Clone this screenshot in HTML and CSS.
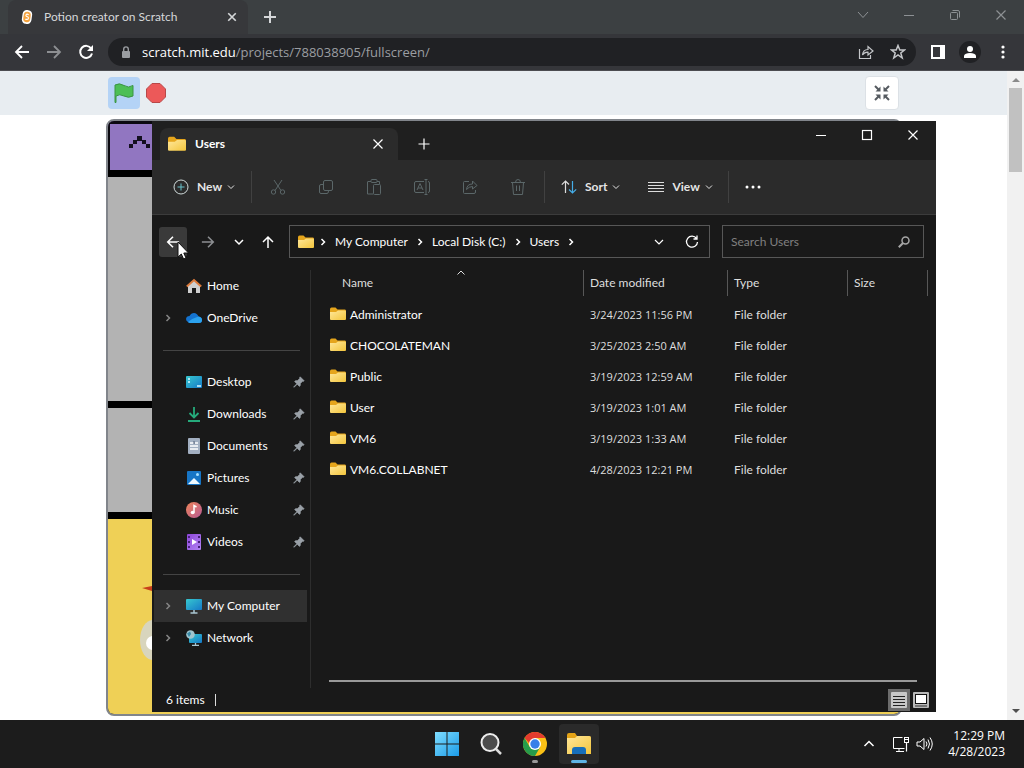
FILE: index.html
```html
<!DOCTYPE html>
<html lang="en">
<head>
<meta charset="utf-8">
<meta name="viewport" content="width=device-width, initial-scale=1">
<title>Potion creator on Scratch</title>
<link rel="stylesheet" href="styles.css">
</head>
<body>
<svg class="defs" aria-hidden="true">
  <defs>
    <linearGradient id="gold" x1="0" y1="0" x2="1" y2="1"><stop offset="0" stop-color="#ffe79a"/><stop offset="1" stop-color="#f3c53c"/></linearGradient>
    <linearGradient id="screen" x1="0" y1="0" x2="1" y2="1"><stop offset="0" stop-color="#37c8cf"/><stop offset="1" stop-color="#1579c8"/></linearGradient>
    <linearGradient id="winblue" x1="0" y1="0" x2="1" y2="1"><stop offset="0" stop-color="#7fddff"/><stop offset="1" stop-color="#1b9be8"/></linearGradient>
    <linearGradient id="rose" x1="0" y1="0" x2="1" y2="1"><stop offset="0" stop-color="#ee8559"/><stop offset="1" stop-color="#b85a94"/></linearGradient>
    <linearGradient id="violet" x1="0" y1="0" x2="1" y2="1"><stop offset="0" stop-color="#8d45d8"/><stop offset="1" stop-color="#b283f4"/></linearGradient>
    <symbol id="folder" viewBox="0 0 16 16"><path d="M0 3.2Q0 1.5 1.5 1.5H5.5L7.5 3.5H15Q16 3.5 16 5V8H0Z" fill="#e5a51c"/><path d="M0 6H6L8 4.5H15Q16 4.5 16 5.5V13Q16 14 15 14H1Q0 14 0 13Z" fill="url(#gold)"/></symbol>
    <symbol id="pin" viewBox="0 0 12 12"><path d="M7.2 0.8 11.2 4.8 10.2 5.5 9.6 5.3 7.4 7.5 7.3 9.6 6.4 10.4 4.2 8.2 1.2 11.2H.8V10.8L3.8 7.8 1.6 5.6 2.4 4.7 4.5 4.6 6.7 2.4 6.5 1.8Z" fill="#9aa1a8" stroke="#9aa1a8" stroke-width=".6"/></symbol>
    <symbol id="chev-down" viewBox="0 0 8 8"><path d="M1 2.5 4 5.5 7 2.5" fill="none" stroke="currentColor"/></symbol>
    <symbol id="chev-right" viewBox="0 0 8 8"><path d="M2.5 1 5.5 4 2.5 7" fill="none" stroke="currentColor" stroke-width="1.5"/></symbol>
    <symbol id="cross" viewBox="0 0 12 12"><path d="M1.5 1.5 10.5 10.5M10.5 1.5 1.5 10.5" fill="none" stroke="currentColor" stroke-width="1.2"/></symbol>
    <symbol id="cross-bold" viewBox="0 0 12 12"><path d="M1.5 1.5 10.5 10.5M10.5 1.5 1.5 10.5" fill="none" stroke="currentColor" stroke-width="2"/></symbol>
    <symbol id="plus" viewBox="0 0 12 12"><path d="M6 .5V11.500M.5 6H11.500" fill="none" stroke="currentColor" stroke-width="1.2"/></symbol>
    <symbol id="left" viewBox="0 0 16 16"><path d="M15 8H2M8 2 2 8 8 14" fill="none" stroke="currentColor" stroke-width="1.8"/></symbol>
    <symbol id="right" viewBox="0 0 16 16"><path d="M1 8H14M8 2 14 8 8 14" fill="none" stroke="currentColor" stroke-width="1.8"/></symbol>
    <symbol id="minus" viewBox="0 0 12 12"><path d="M1 6.500H11" stroke="currentColor"/></symbol>
  </defs>
</svg>
<div class="desktop">
  <section class="browser" aria-label="Browser">
    <header class="tabstrip">
      <div class="tab">
        <svg class="i14" viewBox="0 0 14 16"><rect x="1.500" y="0" width="11" height="16" rx="5" fill="#fff" transform="rotate(8 7 8)"/><rect x="3" y="2" width="8" height="12" rx="4" fill="#f5a440" transform="rotate(8 7 8)"/><path d="M9 5.500C6 3.500 4.500 6.500 7 7.500S9.500 11.500 5 10.500" fill="none" stroke="#fff" stroke-width="1.200"/></svg>
        <span class="tab-title">Potion creator on Scratch</span>
        <button class="plain" aria-label="Close tab"><svg class="i10"><use href="#cross-bold"/></svg></button>
      </div>
      <button class="plain newtab" aria-label="New tab"><svg class="i12" viewBox="0 0 12 12"><path d="M6 0V12M0 6H12" stroke="currentColor" stroke-width="2"/></svg></button>
      <div class="chrome-controls">
        <button class="plain" aria-label="Search tabs"><svg class="i12" viewBox="0 0 12 12"><path d="M1 3 6 8.500 11 3" fill="none" stroke="currentColor"/></svg></button>
        <button class="plain" aria-label="Minimize browser"><svg class="i12"><use href="#minus"/></svg></button>
        <button class="plain" aria-label="Restore browser"><svg class="i12" viewBox="0 0 12 12"><rect x="1.500" y="3.500" width="7" height="7" rx="1" fill="none" stroke="currentColor"/><path d="M3.500 1.500H9Q10.500 1.500 10.500 3V8.500" fill="none" stroke="currentColor"/></svg></button>
        <button class="plain" aria-label="Close browser"><svg class="i12"><use href="#cross"/></svg></button>
      </div>
    </header>
    <div class="toolbar">
      <div class="history">
        <button class="plain" aria-label="Back"><svg class="i16"><use href="#left"/></svg></button>
        <button class="plain dim" aria-label="Forward"><svg class="i16"><use href="#right"/></svg></button>
        <button class="plain" aria-label="Reload"><svg class="i16" viewBox="0 0 16 16"><path d="M13.200 4.500A6 6 0 1 0 14 9.500" fill="none" stroke="currentColor" stroke-width="2"/><path d="M15 1V7H9Z" fill="currentColor"/></svg></button>
      </div>
      <div class="omnibox">
        <svg class="i12" viewBox="0 0 12 12"><rect x="2" y="5" width="8" height="7" rx="1" fill="#9a9da1"/><path d="M3.700 5V3.200A2.300 2.300 0 0 1 8.300 3.200V5" fill="none" stroke="#9a9da1" stroke-width="1.400"/></svg>
        <a class="url" href="#"><b>scratch.mit.edu</b>/projects/788038905/fullscreen/</a>
        <button class="plain" aria-label="Share page"><svg class="i16" viewBox="0 0 16 16"><path d="M1.500 5V14.500H12.500V11M4.500 11Q5 5.500 10 5.500V2.500L15 7 10 11V8.200Q6.500 8 4.500 11Z" fill="none" stroke="currentColor" stroke-width="1.200"/></svg></button>
        <button class="plain" aria-label="Bookmark page"><svg class="i16" viewBox="0 0 16 16"><path d="M8 1.500 9.800 6H14.500L10.800 9 12.200 14 8 11 3.800 14 5.200 9 1.500 6H6.200Z" fill="none" stroke="currentColor" stroke-width="1.500"/></svg></button>
      </div>
      <div class="extras">
        <button class="plain" aria-label="Side panel"><svg class="i14" viewBox="0 0 14 14"><path d="M0 0H14V14H0ZM2 2V12H9V2Z" fill="#fff" fill-rule="evenodd"/></svg></button>
        <button class="plain avatar" aria-label="Profile"><svg class="i12" viewBox="0 0 12 12"><circle cx="6" cy="3" r="3" fill="#fff"/><path d="M0 12V9.500Q1 7 6 7T12 9.500V12Z" fill="#fff"/></svg></button>
        <button class="plain" aria-label="Browser menu"><svg class="i16" viewBox="0 0 16 16" fill="#fff"><circle cx="8" cy="3" r="1.600"/><circle cx="8" cy="8" r="1.600"/><circle cx="8" cy="13" r="1.600"/></svg></button>
      </div>
    </div>
    <div class="viewport">
      <main class="page">
        <div class="stage-controls">
          <button class="plain flag" aria-label="Go"><svg viewBox="0 0 22 22"><path d="M2 3Q6.500.5 11 3.500T20 3.500V14Q15.500 16.500 11 14T3 14V20.500H2Z" fill="#4cbf56" stroke="#3a9443"/></svg></button>
          <button class="plain stop" aria-label="Stop"><svg viewBox="0 0 20 20"><path d="M6 .5H14L19.500 6V14L14 19.500H6L.5 14V6Z" fill="#ec5959" stroke="#b84848"/></svg></button>
          <button class="plain shrink" aria-label="Exit full screen"><svg class="i16" viewBox="0 0 16 16"><path d="M1 1 5 5M15 1 11 5M1 15 5 11M15 15 11 11" stroke="#555a60" stroke-width="2"/><path d="M6.500 1.500V6.500H1.500ZM9.500 1.500V6.500H14.500ZM6.500 14.500V9.500H1.500ZM9.500 14.500V9.500H14.500Z" fill="#555a60"/></svg></button>
        </div>
        <div class="stage">
          <div class="purple"><svg viewBox="0 0 44 46"><path d="M19 20h4v4h-4zM23 16h4v4h-4zM27 12h5v5h-5zM32 16h4v4h-4zM36 20h4v4h-4z" fill="#141020"/></svg></div>
          <div class="grey tall"></div>
          <div class="grey short"></div>
          <div class="yellow"><svg viewBox="0 0 44 192"><path d="M34 69 44 67V72Z" fill="#c8401b"/><ellipse cx="45" cy="121" rx="13" ry="20" fill="#d8d5bd"/><circle cx="45" cy="124" r="7" fill="#fff"/></svg></div>
        </div>
      </main>
      <div class="scrollbar" aria-hidden="true"><span class="up"></span><span class="thumb"></span><span class="down"></span></div>
    </div>
  </section>

  <section class="explorer" aria-label="Users">
    <header class="titlebar">
      <div class="ex-tab"><svg class="i18"><use href="#folder"/></svg><span>Users</span><button class="plain" aria-label="Close Users tab"><svg class="i12"><use href="#cross"/></svg></button></div>
      <button class="plain ex-new" aria-label="New Users tab"><svg class="i12"><use href="#plus"/></svg></button>
      <div class="win-controls">
        <button class="plain" aria-label="Minimize"><svg class="i12"><use href="#minus"/></svg></button>
        <button class="plain" aria-label="Maximize"><svg class="i12" viewBox="0 0 12 12"><rect x="1.500" y="1.500" width="9" height="9" fill="none" stroke="currentColor" stroke-width="1.200"/></svg></button>
        <button class="plain" aria-label="Close"><svg class="i12"><use href="#cross"/></svg></button>
      </div>
    </header>
    <div class="commands">
      <button class="plain cmd new"><svg class="i16" viewBox="0 0 16 16"><circle cx="8" cy="8" r="7" fill="none" stroke="#cfdada"/><path d="M8 4.500V11.500M4.500 8H11.500" stroke="#69c3cc"/></svg>New<svg class="i8"><use href="#chev-down"/></svg></button>
      <span class="rule"></span>
      <div class="edit-group">
        <button class="plain" aria-label="Cut"><svg viewBox="0 0 16 16"><path d="M4 1 11 11.500M12 1 5 11.500"/><circle cx="3.500" cy="13" r="2.200"/><circle cx="12.500" cy="13" r="2.200"/></svg></button>
        <button class="plain" aria-label="Copy"><svg viewBox="0 0 16 16"><rect x="5.500" y="1.500" width="9" height="10" rx="1.500"/><path d="M5.500 5.500H3Q1.500 5.500 1.500 7V13Q1.500 14.500 3 14.500H9Q10.500 14.500 10.500 12"/></svg></button>
        <button class="plain" aria-label="Paste"><svg viewBox="0 0 16 16"><path d="M5 2.500H2Q1.500 2.500 1.500 3V15H7M11 2.500H13.500V5"/><rect x="5" y=".5" width="6" height="3" rx="1"/><rect x="7.500" y="5.500" width="7" height="10" rx="1"/></svg></button>
        <button class="plain" aria-label="Rename"><svg viewBox="0 0 16 16"><path d="M10 2.500H2Q.5 2.500.5 4V12Q.5 13.500 2 13.500H10M12 .5V15.500M10.500 .5H13.500M10.500 15.500H13.500M14 2.500Q15.500 2.500 15.500 4V12Q15.500 13.500 14 13.500M3 11 6 4.500 9 11M4 9H8"/></svg></button>
        <button class="plain" aria-label="Share"><svg viewBox="0 0 16 16"><path d="M7 2.500H2.500Q1.500 2.500 1.500 3.500V13.500Q1.500 14.500 2.500 14.500H12Q13.500 14.500 13.500 13V11M4.500 10.500Q5 5 10.500 5V2L15 6.500 10.500 10V7.500Q7 7.500 4.500 10.500Z"/></svg></button>
        <button class="plain" aria-label="Delete"><svg viewBox="0 0 16 16"><path d="M1 3.500H15M5.500 3.500Q5.500.5 8 .5T10.500 3.500M2.500 3.500 3.500 15.500H12.500L13.500 3.500M6.500 6.500V12M9.500 6.500V12"/></svg></button>
      </div>
      <span class="rule"></span>
      <button class="plain cmd sort"><svg class="i16" viewBox="0 0 16 16" fill="none"><path d="M4.500 14V2M.8 5.700 4.500 2 8 5.500" stroke="#ddd" stroke-width="1.200"/><path d="M11.500 2V14M8 10.500 11.500 14 15.200 10.300" stroke="#45aee8" stroke-width="1.200"/></svg>Sort<svg class="i8"><use href="#chev-down"/></svg></button>
      <button class="plain cmd view"><svg class="i16" viewBox="0 0 16 16"><path d="M0 3.500H16M0 6.500H16M0 9.500H16M0 12.500H16" stroke="#ddd"/></svg>View<svg class="i8"><use href="#chev-down"/></svg></button>
      <span class="rule"></span>
      <button class="plain more" aria-label="See more"><svg class="i16" viewBox="0 0 16 16" fill="#fff"><circle cx="2" cy="8" r="1.500"/><circle cx="8" cy="8" r="1.500"/><circle cx="14" cy="8" r="1.500"/></svg></button>
    </div>
    <div class="location">
      <div class="ex-history">
        <button class="plain current" aria-label="Previous folder"><svg class="i14"><use href="#left"/></svg></button>
        <button class="plain dim" aria-label="Next folder"><svg class="i14"><use href="#right"/></svg></button>
        <button class="plain" aria-label="Recent locations"><svg class="i12" viewBox="0 0 12 12"><path d="M2 4 6 8 10 4" fill="none" stroke="currentColor" stroke-width="1.500"/></svg></button>
        <button class="plain" aria-label="Up one level"><svg class="i14" viewBox="0 0 14 14"><path d="M7 13V2M2 7 7 2 12 7" fill="none" stroke="currentColor" stroke-width="1.500"/></svg></button>
      </div>
      <nav class="crumbs" aria-label="Address">
        <svg class="i16"><use href="#folder"/></svg>
        <svg class="i8"><use href="#chev-right"/></svg><a href="#">My Computer</a>
        <svg class="i8"><use href="#chev-right"/></svg><a href="#">Local Disk (C:)</a>
        <svg class="i8"><use href="#chev-right"/></svg><a href="#">Users</a>
        <svg class="i8"><use href="#chev-right"/></svg>
        <button class="plain drop" aria-label="Previous locations"><svg class="i12" viewBox="0 0 12 12"><path d="M2 4 6 8 10 4" fill="none" stroke="currentColor" stroke-width="1.200"/></svg></button>
        <button class="plain" aria-label="Refresh"><svg class="i14" viewBox="0 0 14 14"><path d="M11.500 3.500A5.500 5.500 0 1 0 12.500 7M12 .5V4H8.500" fill="none" stroke="currentColor" stroke-width="1.300"/></svg></button>
      </nav>
      <label class="search"><input type="text" aria-label="Search Users" placeholder="Search Users"><svg class="i12" viewBox="0 0 12 12"><circle cx="7.500" cy="4.500" r="3.500" fill="none" stroke="currentColor" stroke-width="1.500"/><path d="M5 7 .8 11.200" stroke="currentColor" stroke-width="2"/></svg></label>
    </div>
    <div class="content">
      <nav class="sidebar" aria-label="Places">
        <a class="place" href="#"><span></span><svg class="i16" viewBox="0 0 16 16"><path d="M2 7 8 2 14 7V15H10V10H6V15H2Z" fill="#cfcfcf"/><path d="M.8 8.500 8 2 15.200 8.500" fill="none" stroke="#dd7b3c" stroke-width="2"/></svg>Home</a>
        <a class="place" href="#"><svg class="i8"><use href="#chev-right"/></svg><svg class="i16" viewBox="0 0 16 16"><path d="M2 12Q0 11 0 9 .3 6 3.500 6 5 3 8 3T12.500 6.500Q16 7 16 10 16 13 13 13H4Q3 13 2 12Z" fill="#1473cf"/><path d="M2 12Q7 8 12.500 6.500 16 7 16 10 16 13 13 13H4Q3 13 2 12Z" fill="#2ba2ee"/></svg>OneDrive</a>
        <div class="separator"></div>
        <a class="place" href="#"><span></span><svg class="i16" viewBox="0 0 16 16"><rect y="2" width="16" height="12" rx="1" fill="url(#screen)"/><path d="M2 5H4M2 8H4M11 12H15" stroke="#d9f9ff" stroke-width="1.500"/></svg>Desktop<svg class="i12 pin"><use href="#pin"/></svg></a>
        <a class="place" href="#"><span></span><svg class="i16" viewBox="0 0 16 16"><path d="M8 1V11M3.500 7 8 11.500 12.500 7M2 15H14" fill="none" stroke="#25aa7b" stroke-width="1.800"/></svg>Downloads<svg class="i12 pin"><use href="#pin"/></svg></a>
        <a class="place" href="#"><span></span><svg class="i16" viewBox="0 0 16 16"><rect x="2" width="12" height="16" rx="1" fill="#a2afc1"/><path d="M4 5H8M4 8H12M4 11H12M9 5H12" stroke="#fff" stroke-width="1.500"/><path d="M8 3V6" stroke="#536178"/></svg>Documents<svg class="i12 pin"><use href="#pin"/></svg></a>
        <a class="place" href="#"><span></span><svg class="i16" viewBox="0 0 16 16"><rect x="1" y="1" width="14" height="14" rx="1" fill="#1775c5"/><path d="M2 14 8 8 14 14Z" fill="#effaff"/><circle cx="11.500" cy="4.500" r="1.500" fill="#a5e1ff"/></svg>Pictures<svg class="i12 pin"><use href="#pin"/></svg></a>
        <a class="place" href="#"><span></span><svg class="i16" viewBox="0 0 16 16"><circle cx="8" cy="8" r="8" fill="url(#rose)"/><ellipse cx="6.700" cy="10.500" rx="2" ry="1.700" fill="#fff"/><path d="M8 10.500V3.500L10.500 5" fill="none" stroke="#fff" stroke-width="1.500"/></svg>Music<svg class="i12 pin"><use href="#pin"/></svg></a>
        <a class="place" href="#"><span></span><svg class="i16" viewBox="0 0 16 16"><rect x="1" width="14" height="16" rx="1" fill="url(#violet)"/><path d="M3 2V14M13 2V14" stroke="#48217a" stroke-width="2" stroke-dasharray="2 3"/><path d="M6 5 11 8 6 11Z" fill="#fff"/></svg>Videos<svg class="i12 pin"><use href="#pin"/></svg></a>
        <div class="separator"></div>
        <a class="place selected" href="#"><svg class="i8"><use href="#chev-right"/></svg><svg class="i16" viewBox="0 0 16 16"><rect y="1" width="16" height="11" rx="1" fill="url(#screen)"/><path d="M8 12V14.500M4.500 15H11.500" stroke="#a9c6d2" stroke-width="1.500"/></svg>My Computer</a>
        <a class="place" href="#"><svg class="i8"><use href="#chev-right"/></svg><svg class="i16" viewBox="0 0 16 16"><rect x="3" y="4" width="13" height="9" rx="1" fill="url(#screen)"/><path d="M9.500 13V15M6 15.300H13" stroke="#a9c6d2" stroke-width="1.300"/><circle cx="4.500" cy="4.500" r="4.300" fill="#9fc5cf"/><path d="M1 3.500 4 1.500 5 4 3 7Z" fill="#3788a5"/></svg>Network</a>
      </nav>
      <div class="listing">
        <table>
          <thead><tr><th scope="col" class="name">Name<svg class="i8 sorted" viewBox="0 0 8 8"><path d="M.5 5.500 4 2 7.500 5.500" fill="none" stroke="currentColor"/></svg></th><th scope="col" class="date">Date modified</th><th scope="col" class="type">Type</th><th scope="col" class="size">Size</th></tr></thead>
          <tbody>
            <tr><td><svg class="i16"><use href="#folder"/></svg>Administrator</td><td class="stamp">3/24/2023 11:56 PM</td><td>File folder</td><td></td></tr>
            <tr><td><svg class="i16"><use href="#folder"/></svg>CHOCOLATEMAN</td><td class="stamp">3/25/2023 2:50 AM</td><td>File folder</td><td></td></tr>
            <tr><td><svg class="i16"><use href="#folder"/></svg>Public</td><td class="stamp">3/19/2023 12:59 AM</td><td>File folder</td><td></td></tr>
            <tr><td><svg class="i16"><use href="#folder"/></svg>User</td><td class="stamp">3/19/2023 1:01 AM</td><td>File folder</td><td></td></tr>
            <tr><td><svg class="i16"><use href="#folder"/></svg>VM6</td><td class="stamp">3/19/2023 1:33 AM</td><td>File folder</td><td></td></tr>
            <tr><td><svg class="i16"><use href="#folder"/></svg>VM6.COLLABNET</td><td class="stamp">4/28/2023 12:21 PM</td><td>File folder</td><td></td></tr>
          </tbody>
        </table>
        <div class="hscroll"></div>
      </div>
    </div>
    <footer class="status"><span class="count">6 items</span>
      <button class="plain mode active" aria-label="Details view"><svg class="i16" viewBox="0 0 16 16"><rect width="16" height="16" rx="1" fill="#c8c8c8"/><path d="M2 4.500H14M2 7.500H14M2 10.500H14M2 13.500H14" stroke="#222"/></svg></button>
      <button class="plain mode" aria-label="Large icons view"><svg class="i16" viewBox="0 0 16 16"><rect width="16" height="16" rx="1" fill="#b8b8b8"/><rect x="2.500" y="2.500" width="11" height="9" fill="#fff" stroke="#111"/><path d="M2 14H14" stroke="#333"/></svg></button>
    </footer>
    <svg class="cursor" viewBox="0 0 12 19"><path d="M1 1V16L4.300 13 6.600 18 9 17 6.800 12H11.500Z" fill="#fff" stroke="#111"/></svg>
  </section>

  <footer class="taskbar">
    <div class="apps">
      <button class="plain" aria-label="Start"><svg viewBox="0 0 24 24" fill="url(#winblue)"><path d="M0 0H11.500V11.500H0ZM12.500 0H24V11.500H12.500ZM0 12.500H11.500V24H0ZM12.500 12.500H24V24H12.500Z"/></svg></button>
      <button class="plain" aria-label="Search"><svg viewBox="0 0 24 24"><circle cx="11" cy="10.500" r="8.500" fill="#4b4b4b" stroke="#ececec" stroke-width="2"/><path d="M17 17 22 22" stroke="#dcdcdc" stroke-width="2.500"/></svg></button>
      <button class="plain running" aria-label="Chrome"><svg viewBox="0 0 24 24"><circle cx="12" cy="12" r="12" fill="#fbc116"/><path d="M1.600 6A12 12 0 0 1 22.400 6H12V18Z" fill="#e33b2e"/><path d="M1.600 6A12 12 0 0 0 12 24L17.200 15 12 12 6.800 15Z" fill="#269c4b"/><circle cx="12" cy="12" r="6" fill="#fff"/><circle cx="12" cy="12" r="4.700" fill="#377ee8"/></svg></button>
      <button class="plain running open" aria-label="File Explorer"><svg viewBox="0 0 24 24"><path d="M0 3Q0 1 2 1H8L10 4H22Q24 4 24 6V9H0Z" fill="#e4a316"/><path d="M0 6H8L10 4H22Q24 4 24 6V22H0Z" fill="url(#gold)"/><path d="M5 22V18Q5 15 8 15H16Q19 15 19 18V22Z" fill="#176fba"/></svg></button>
    </div>
    <div class="tray">
      <button class="plain" aria-label="Hidden icons"><svg class="i12" viewBox="0 0 12 12"><path d="M1.500 8 6 3.500 10.500 8" fill="none" stroke="currentColor" stroke-width="1.500"/></svg></button>
      <button class="plain" aria-label="Network status"><svg class="i18" viewBox="0 0 18 18" fill="none" stroke="currentColor"><path d="M10.500 2.500H1.500V13.500H12.500M7 13.500V16.500M4 16.500H12"/><rect x="12.500" y="2.500" width="4" height="5"/><path d="M14.500 7.500V16.500M13 4.500H16" stroke-width="1.200"/></svg></button>
      <button class="plain" aria-label="Volume"><svg class="i18" viewBox="0 0 18 18" fill="none" stroke="currentColor"><path d="M1 7V11H4L8 14.500V3.500L4 7ZM10 6.500Q12 9 10 11.500M12 4.500Q15 9 12 13.500M14 2.500Q18.500 9 14 15.500"/></svg></button>
      <div class="clock"><span>12:29 PM</span><span>4/28/2023</span></div>
    </div>
  </footer>
</div>
</body>
</html>
```
FILE: styles.css
```css
* { box-sizing: border-box; }
body { margin: 0; font: 12px/16px Lato, "Open Sans", sans-serif; color: #fff; }
svg { display: block; flex: none; }
a { color: inherit; text-decoration: none; }
.defs { position: absolute; width: 0; height: 0; }
.i8 { width: 8px; height: 8px; }
.i10 { width: 10px; height: 10px; }
.i12 { width: 12px; height: 12px; }
.i14 { width: 14px; height: 14px; }
.i16 { width: 16px; height: 16px; }
.i18 { width: 18px; height: 18px; }
.plain { border: 0; padding: 0; background: none; color: inherit; font: inherit; display: flex; align-items: center; justify-content: center; flex: none; }
.dim { color: #8d8f92; }

.desktop { position: relative; height: 100vh; min-height: 600px; display: flex; flex-direction: column; overflow: hidden; }
.browser { flex: 1; min-height: 0; display: flex; flex-direction: column; background: #fff; }

.tabstrip { height: 34px; display: flex; background: #3c4042; color: #d5d7d9; padding-left: 8px; }
.tab { width: 240px; display: flex; align-items: center; gap: 10px; padding: 0 11px 0 12px; background: #37383b; border-radius: 8px 8px 0 0; }
.tab-title { flex: 1; }
.newtab { width: 44px; }
.chrome-controls { margin-left: auto; display: flex; color: #8d9194; }
.chrome-controls .plain { width: 46px; height: 29px; }
.toolbar { height: 37px; display: flex; align-items: center; background: #35363a; border-bottom: 1px solid #4b4c50; }
.history { width: 108px; display: flex; gap: 16px; padding-left: 14px; }
.omnibox { flex: 1; height: 28px; display: flex; align-items: center; padding: 0 10px 0 12px; gap: 16px; border-radius: 14px; background: #202124; color: #c4c6c9; }
.url { flex: 1; margin-left: -6px; font-family: "Open Sans", sans-serif; font-size: 13px; color: #9b9ea2; }
.url b { font-weight: 400; color: #fff; }
.extras { width: 108px; display: flex; align-items: center; justify-content: space-between; padding: 0 13px 0 15px; }
.avatar { width: 22px; height: 22px; border-radius: 50%; background: #202124; }

.viewport { flex: 1; min-height: 0; display: flex; }
.page { flex: 1; display: flex; flex-direction: column; background: #fff; }
.stage-controls { height: 44px; display: flex; align-items: center; gap: 6px; padding: 0 108px; background: #e8edf1; }
.flag { width: 32px; height: 32px; border-radius: 4px; background: #b4d3f6; }
.flag svg { width: 22px; height: 22px; }
.stop svg { width: 20px; height: 20px; }
.shrink { width: 34px; height: 34px; margin-left: auto; background: #fff; border: 1px solid #dce1e6; border-radius: 4px; }
.stage { flex: 1; margin: 4px 105px 4px 106px; border: 2px solid #81858b; border-radius: 8px; overflow: hidden; display: flex; flex-direction: column; gap: 7px; background: #000; }
.purple { height: 49px; border: 3px solid #0b0910; border-width: 3px 0 0 2px; background: #9176c1; }
.purple svg { width: 44px; height: 46px; }
.grey { background: #b3b3b3; }
.tall { flex: 224; }
.short { flex: 105; }
.yellow { flex: 195; background: #efd056; }
.yellow svg { width: 44px; height: 192px; }
.scrollbar { width: 17px; display: flex; flex-direction: column; align-items: center; background: #f1f1f1; padding: 7px 0; }
.up, .down { border: 4px solid transparent; }
.up { border-top: 0; border-bottom-color: #8b8b8b; }
.down { margin-top: auto; border-bottom: 0; border-top-color: #505050; }
.thumb { width: 13px; height: 84px; margin-top: 6px; background: #c1c1c1; }

.explorer { position: absolute; left: 152px; right: 88px; top: 121px; bottom: 56px; display: flex; flex-direction: column; background: #191919; }
.titlebar { height: 39px; display: flex; align-items: flex-end; padding-left: 8px; background: #1f1f1f; }
.ex-tab { width: 238px; height: 32px; display: flex; align-items: center; gap: 9px; padding: 0 14px 0 8px; border-radius: 8px 8px 0 0; background: #2b2b2b; font-weight: 700; }
.ex-tab span { flex: 1; }
.ex-new { width: 52px; height: 32px; }
.win-controls { margin-left: auto; align-self: flex-start; display: flex; }
.win-controls .plain { width: 46px; height: 28px; }
.commands { height: 55px; display: flex; align-items: center; background: #2b2b2b; border-bottom: 1px solid #3c3c3c; }
.cmd { gap: 8px; height: 32px; font-weight: 700; color: #e5e5e5; }
.cmd .i8 { margin-left: -3px; }
.new { padding: 0 16px 0 21px; }
.rule { width: 1px; height: 32px; background: #414141; }
.edit-group { display: flex; padding: 0 2px; }
.edit-group .plain { width: 48px; height: 32px; }
.edit-group svg { width: 16px; height: 16px; fill: none; stroke: #5b6769; }
.sort { padding: 0 14px 0 16px; }
.view { padding: 0 15px 0 14px; }
.more { width: 48px; height: 32px; }

.location { height: 55px; display: flex; align-items: center; padding: 0 12px 2px 7px; }
.ex-history { width: 130px; display: flex; align-items: center; }
.ex-history .plain { width: 30px; height: 30px; margin-right: 4px; }
.ex-history .plain:nth-child(3) { width: 24px; margin-right: 2px; }
.ex-history .current { width: 28px; margin-right: 6px; background: #3a3a3a; border-radius: 3px; }
.crumbs { flex: 1; height: 33px; display: flex; align-items: center; gap: 8px; padding: 0 10px 0 8px; border: 1px solid #575757; }
.crumbs .i16 { margin-right: -3px; }
.drop { margin: 0 12px 0 auto; }
.search { width: 202px; height: 33px; margin-left: 12px; display: flex; align-items: center; padding: 0 13px 0 8px; border: 1px solid #575757; color: #a6a6a6; }
.search input { flex: 1; min-width: 0; border: 0; padding: 0; background: none; outline: 0; font: inherit; color: #fff; }
.search input::placeholder { color: #808080; opacity: 1; }

.content { flex: 1; min-height: 0; display: flex; }
.sidebar { width: 159px; padding: 0 3px 0 2px; border-right: 1px solid #2d2d2d; }
.place { height: 32px; display: flex; align-items: center; gap: 5px; padding: 0 2px 0 10px; }
.place > :first-child { width: 8px; margin-right: 9px; color: #858585; }
.pin { margin-left: auto; }
.selected { background: #303030; }
.separator { height: 32px; padding: 16px 7px 0 9px; }
.separator::after { content: ""; display: block; height: 1px; background: #444; }
.listing { flex: 1; min-width: 0; display: flex; flex-direction: column; padding: 0 8px 6px 18px; }
table { width: 100%; border-collapse: collapse; table-layout: fixed; color: #dedede; }
th { height: 29px; padding: 0 0 3px 6px; font-weight: 400; text-align: left; background: linear-gradient(#575757, #575757) right top / 1px 26px no-repeat; }
.name { width: 255px; padding-left: 13px; position: relative; }
.sorted { position: absolute; left: 50%; top: -1px; }
.date { width: 144px; }
.type { width: 120px; }
td { height: 31px; padding: 0 0 0 6px; }
td:first-child { padding-left: 1px; color: #fff; }
td:first-child svg { display: inline-block; vertical-align: -3px; margin-right: 4px; }
.stamp, .clock { font-family: "Open Sans", sans-serif; font-size: 11px; }
.hscroll { height: 2px; margin: auto 11px 0 0; background: #999; }
.status { height: 24px; display: flex; align-items: center; padding: 0 4px 0 14px; }
.count { margin-right: auto; line-height: 12px; padding-right: 10px; border-right: 1px solid #ddd; }
.mode { width: 22px; height: 22px; }
.active { background: #6c6c6c; }
.cursor { position: absolute; left: 25px; top: 120px; width: 12px; height: 19px; }

.taskbar { position: relative; height: 48px; display: flex; align-items: center; justify-content: flex-end; background: #1c1c1c; }
.apps { position: absolute; left: 0; right: 0; top: 4px; display: flex; justify-content: center; gap: 4px; padding-left: 2px; }
.apps .plain { position: relative; width: 40px; height: 40px; border-radius: 4px; }
.apps svg { width: 24px; height: 24px; }
.running::after { content: ""; position: absolute; bottom: 1px; width: 6px; height: 3px; border-radius: 2px; background: #999; }
.open { background: #2a2a2a; }
.running.open::after { width: 16px; background: #5eb4e5; }
.tray { position: relative; display: flex; align-items: center; gap: 6px; padding-right: 19px; }
.tray > :first-child { margin-right: 11px; }
.clock { display: flex; flex-direction: column; align-items: flex-end; margin-left: 8px; font-size: 12px; }
```
